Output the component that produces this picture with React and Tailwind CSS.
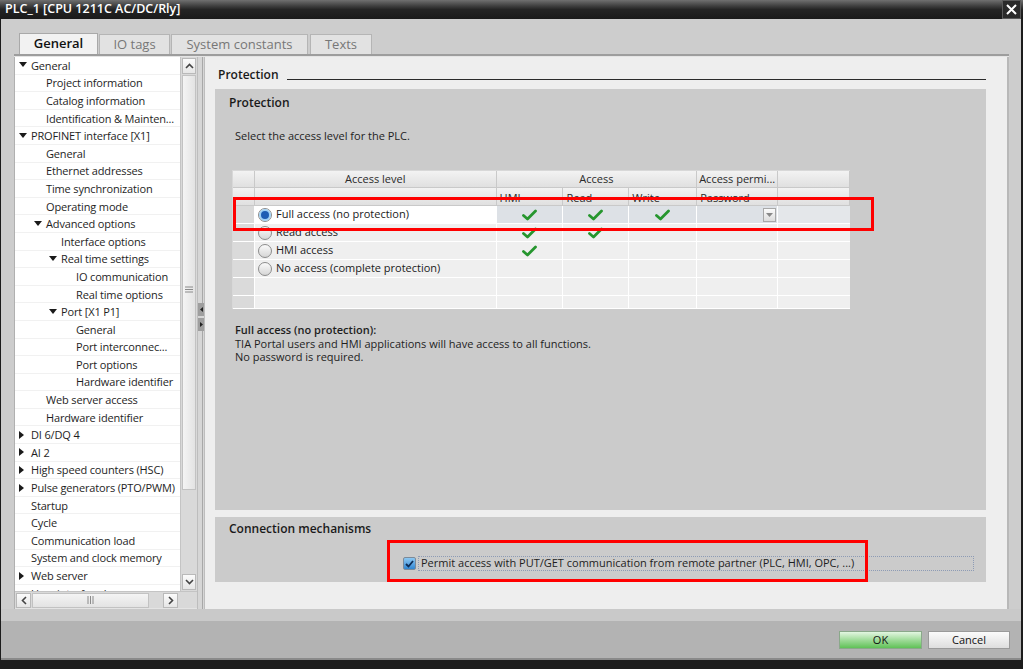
import React from "react";

const FONT = { fontFamily: '"Open Sans", "Noto Sans", sans-serif' };

const tree = [
  [0, "down", "General"],
  [1, null, "Project information"],
  [1, null, "Catalog information"],
  [1, null, "Identification & Mainten..."],
  [0, "down", "PROFINET interface [X1]"],
  [1, null, "General"],
  [1, null, "Ethernet addresses"],
  [1, null, "Time synchronization"],
  [1, null, "Operating mode"],
  [1, "down", "Advanced options"],
  [2, null, "Interface options"],
  [2, "down", "Real time settings"],
  [3, null, "IO communication"],
  [3, null, "Real time options"],
  [2, "down", "Port [X1 P1]"],
  [3, null, "General"],
  [3, null, "Port interconnec..."],
  [3, null, "Port options"],
  [3, null, "Hardware identifier"],
  [1, null, "Web server access"],
  [1, null, "Hardware identifier"],
  [0, "right", "DI 6/DQ 4"],
  [0, "right", "AI 2"],
  [0, "right", "High speed counters (HSC)"],
  [0, "right", "Pulse generators (PTO/PWM)"],
  [0, null, "Startup"],
  [0, null, "Cycle"],
  [0, null, "Communication load"],
  [0, null, "System and clock memory"],
  [0, "right", "Web server"],
  [0, null, "User interface languages"],
];

const indent = {
  0: "pl-[4px]",
  1: "pl-[19px]",
  2: "pl-[34px]",
  3: "pl-[49px]",
};

function Arrow({ dir }) {
  if (!dir) return <span className="w-[12px] shrink-0" />;
  return (
    <span className="w-[12px] shrink-0 flex items-center">
      {dir === "down" ? (
        <svg width="8" height="6" viewBox="0 0 8 6"><path d="M0 0 H8 L4 5 Z" fill="#1a1a1a" /></svg>
      ) : (
        <svg width="6" height="8" viewBox="0 0 6 8"><path d="M0 0 V8 L5 4 Z" fill="#1a1a1a" /></svg>
      )}
    </span>
  );
}

function Check() {
  return (
    <svg width="15" height="12" viewBox="0 0 15 12">
      <path d="M1.5 6.5 L5.5 10 L13.5 2" stroke="#26962e" strokeWidth="2.8" fill="none" strokeLinecap="round" strokeLinejoin="round" />
    </svg>
  );
}

function Radio({ on }) {
  return (
    <span className="w-[14px] h-[14px] rounded-full border border-[#8c8c8c] bg-gradient-to-b from-[#fafafa] to-[#d6d6d6] flex items-center justify-center shrink-0">
      {on && <span className="w-[8px] h-[8px] rounded-full bg-[#1d5db4] ring-2 ring-[#9fd0f4]" />}
    </span>
  );
}

const cols = ["w-[67px]", "w-[66px]", "w-[68px]"];

function Row({ label, checks, selected, empty, last }) {
  const h = last ? "h-[13px]" : "h-[18px]";
  return (
    <div className={`flex ${h} border-b border-white`}>
      <div className="w-[22px] bg-[#dadada] border-r border-white" />
      <div className={`w-[242px] flex items-center gap-[4px] pl-[3px] border-r border-white ${selected ? "bg-white" : "bg-[#efefef]"}`}>
        {!empty && <Radio on={selected} />}
        {!empty && <span className="text-[11px] text-[#1a1a1a]">{label}</span>}
      </div>
      {cols.map((c, i) => (
        <div key={i} className={`${c} flex items-center justify-center border-r border-white ${selected ? "bg-[#dde1e6]" : "bg-[#efefef]"}`}>
          {checks && checks[i] ? <Check /> : null}
        </div>
      ))}
      <div className={`w-[81px] flex items-center justify-end pr-[1px] border-r border-white ${selected ? "bg-[#dde1e6]" : "bg-[#efefef]"}`}>
        {selected && (
          <span className="w-[13px] h-[14px] border border-[#a8a8a8] bg-gradient-to-b from-[#fbfbfb] to-[#dcdcdc] flex items-center justify-center">
            <svg width="7" height="4" viewBox="0 0 7 4"><path d="M0 0 H7 L3.5 4 Z" fill="#888" /></svg>
          </span>
        )}
      </div>
      <div className={`w-[72px] ${selected ? "bg-[#e4e7ea]" : "bg-[#efefef]"}`} />
    </div>
  );
}

export default function App() {
  const hdr = "bg-gradient-to-b from-[#f3f3f3] to-[#e0e0e0] border-r border-b border-[#c9c9c9] text-[11px] text-[#2a2a2a] flex items-center";
  return (
    <div className="w-[1023px] h-[669px] bg-[#1c1c1c] relative overflow-hidden select-none" style={FONT}>
      {/* title bar */}
      <div className="h-[19px] flex items-center justify-between bg-gradient-to-b from-[#707070] via-[#242424] to-[#1a1a1a]">
        <span className="pl-[5px] text-white text-[12.5px] font-semibold leading-none">PLC_1 [CPU 1211C AC/DC/Rly]</span>
        <span className="w-[19px] h-[19px] mr-[2px] border border-[#5a5a5a] bg-[#2a2a2a] flex items-center justify-center">
          <svg width="11" height="11" viewBox="0 0 11 11"><path d="M1 1 L10 10 M10 1 L1 10" stroke="#fff" strokeWidth="2" /></svg>
        </span>
      </div>

      {/* body */}
      <div className="mx-[1px] mr-[2px] h-[641px] bg-[#cdcdcd] flex flex-col">
        {/* tabs */}
        <div className="flex items-end h-[35px] pl-[18px] gap-[1px]">
          <div className="h-[21px] w-[79px] bg-[#f2f2f2] border border-[#a9a9a9] border-b-0 flex items-center justify-center text-[13px] font-semibold text-[#111]">General</div>
          <div className="h-[20px] w-[71px] bg-[#e2e2e2] border border-[#b5b5b5] border-b-0 flex items-center justify-center text-[13px] text-[#777]">IO tags</div>
          <div className="h-[20px] w-[137px] bg-[#e2e2e2] border border-[#b5b5b5] border-b-0 flex items-center justify-center text-[13px] text-[#777]">System constants</div>
          <div className="h-[20px] w-[62px] ml-[1px] bg-[#e2e2e2] border border-[#b5b5b5] border-b-0 flex items-center justify-center text-[13px] text-[#777]">Texts</div>
        </div>

        {/* frame */}
        <div className="ml-[13px] w-[995px] h-[555px] border-t-2 border-[#9d9d9d] bg-[#e4e4e4] pt-[1px] flex">
          {/* sidebar */}
          <div className="w-[183px] flex flex-col border-l border-[#b0b0b0]">
            <div className="flex h-[534px]">
              <div className="w-[165px] bg-white overflow-hidden">
                {tree.map(([lv, ar, t], i) => (
                  <div key={i} className={`h-[17.6px] flex items-center border-b border-[#f1f1f1] ${indent[lv]}`}>
                    <Arrow dir={ar} />
                    <span className="text-[11px] tracking-[-0.15px] text-[#1e1e1e] whitespace-nowrap leading-none">{t}</span>
                  </div>
                ))}
              </div>
              {/* vertical scrollbar */}
              <div className="w-[17px] bg-[#d9d9d9] flex flex-col border-l border-[#c4c4c4]">
                <div className="h-[16px] m-[1px] border border-[#b9b9b9] bg-gradient-to-b from-[#fbfbfb] to-[#e6e6e6] flex items-center justify-center">
                  <svg width="9" height="6" viewBox="0 0 9 6"><path d="M1 5 L4.5 1.5 L8 5" stroke="#444" strokeWidth="1.6" fill="none" /></svg>
                </div>
                <div className="h-[415px] mx-[1px] border border-[#c2c2c2] bg-gradient-to-r from-[#f4f4f4] to-[#e3e3e3] flex items-center justify-center pt-[14px]">
                  <svg width="8" height="7" viewBox="0 0 8 7"><path d="M0 1 H8 M0 3.5 H8 M0 6 H8" stroke="#8a8a8a" strokeWidth="1" /></svg>
                </div>
                <div className="flex-1" />
                <div className="h-[16px] m-[1px] border border-[#b9b9b9] bg-gradient-to-b from-[#fbfbfb] to-[#e6e6e6] flex items-center justify-center">
                  <svg width="9" height="6" viewBox="0 0 9 6"><path d="M1 1 L4.5 4.5 L8 1" stroke="#444" strokeWidth="1.6" fill="none" /></svg>
                </div>
              </div>
            </div>
            {/* horizontal scrollbar */}
            <div className="h-[17px] bg-[#d9d9d9] flex items-center px-[1px] gap-[1px] border-t border-[#c4c4c4]">
              <div className="w-[15px] h-[15px] border border-[#b9b9b9] bg-gradient-to-b from-[#fbfbfb] to-[#e6e6e6] flex items-center justify-center">
                <svg width="6" height="9" viewBox="0 0 6 9"><path d="M5 1 L1.5 4.5 L5 8" stroke="#444" strokeWidth="1.6" fill="none" /></svg>
              </div>
              <div className="w-[117px] h-[15px] border border-[#c2c2c2] bg-gradient-to-b from-[#f4f4f4] to-[#e3e3e3] flex items-center justify-center">
                <svg width="7" height="8" viewBox="0 0 7 8"><path d="M1 0 V8 M3.5 0 V8 M6 0 V8" stroke="#8a8a8a" strokeWidth="1" /></svg>
              </div>
              <div className="flex-1" />
              <div className="w-[15px] h-[15px] border border-[#b9b9b9] bg-gradient-to-b from-[#fbfbfb] to-[#e6e6e6] flex items-center justify-center">
                <svg width="6" height="9" viewBox="0 0 6 9"><path d="M1 1 L4.5 4.5 L1 8" stroke="#444" strokeWidth="1.6" fill="none" /></svg>
              </div>
              <div className="w-[17px]" />
            </div>
          </div>

          {/* divider */}
          <div className="w-[8px] bg-[#d6d6d6] flex flex-col items-center border-l border-[#bdbdbd] border-r">
            <div className="w-[4px] h-[246px] border-r border-[#a8a8a8]" />
            <div className="w-[6px] h-[13px] bg-[#9e9e9e] flex items-center justify-center">
              <svg width="3" height="5" viewBox="0 0 3 5"><path d="M3 0 V5 L0 2.5 Z" fill="#222" /></svg>
            </div>
            <div className="w-[6px] h-[13px] mt-[2px] bg-[#9e9e9e] flex items-center justify-center">
              <svg width="3" height="5" viewBox="0 0 3 5"><path d="M0 0 V5 L3 2.5 Z" fill="#222" /></svg>
            </div>
            <div className="w-[4px] flex-1 border-r border-[#a8a8a8]" />
          </div>

          {/* right content */}
          <div className="flex-1 bg-[#eeeeee] flex flex-col border-r-2 border-[#b8b8b8]">
            <div className="h-[32px] flex items-center pl-[13px] pr-[21px] pt-[4px]">
              <span className="text-[12px] font-semibold text-[#1a1a1a]">Protection</span>
              <div className="flex-1 ml-[8px] mt-[8px] border-t border-[#2a2a2a]" />
            </div>

            {/* protection panel */}
            <div className="ml-[10px] w-[771px] h-[421px] bg-[#cbcbcb] flex flex-col">
              <div className="pl-[14px] pt-[6px] text-[12px] font-semibold text-[#1a1a1a] leading-[16px]">Protection</div>
              <div className="pl-[20px] mt-[18px] text-[11px] text-[#1e1e1e] leading-[14px]">Select the access level for the PLC.</div>

              {/* table */}
              <div className="ml-[17px] mt-[27px] w-[618px] flex flex-col border-t border-l border-[#d8d8d8]">
                <div className="flex h-[17px]">
                  <div className={`w-[22px] ${hdr}`} />
                  <div className={`w-[242px] justify-center ${hdr}`}>Access level</div>
                  <div className={`w-[201px] justify-center ${hdr}`}>Access</div>
                  <div className={`w-[81px] justify-center ${hdr}`}>Access permi...</div>
                  <div className={`w-[72px] ${hdr}`} />
                </div>
                <div className="flex h-[18px]">
                  <div className={`w-[22px] ${hdr}`} />
                  <div className={`w-[242px] ${hdr}`} />
                  <div className={`w-[67px] pl-[3px] pt-[4px] ${hdr}`}>HMI</div>
                  <div className={`w-[66px] pl-[3px] pt-[4px] ${hdr}`}>Read</div>
                  <div className={`w-[68px] pl-[3px] pt-[4px] ${hdr}`}>Write</div>
                  <div className={`w-[81px] pl-[3px] pt-[4px] ${hdr}`}>Password</div>
                  <div className={`w-[72px] ${hdr}`} />
                </div>
                <Row label="Full access (no protection)" checks={[true, true, true]} selected />
                <Row label="Read access" checks={[true, true, false]} />
                <Row label="HMI access" checks={[true, false, false]} />
                <Row label="No access (complete protection)" />
                <Row empty />
                <Row empty last />
              </div>

              <div className="pl-[20px] mt-[14px] text-[11px] text-[#1e1e1e] leading-[13.5px]">
                <div className="font-semibold">Full access (no protection):</div>
                <div>TIA Portal users and HMI applications will have access to all functions.</div>
                <div>No password is required.</div>
              </div>
            </div>

            <div className="h-[7px]" />

            {/* connection mechanisms */}
            <div className="ml-[10px] w-[771px] h-[65px] bg-[#cbcbcb] flex flex-col">
              <div className="pl-[14px] pt-[4px] text-[12px] font-semibold text-[#1a1a1a] leading-[16px]">Connection mechanisms</div>
              <div className="mt-[19px] ml-[188px] flex items-center">
                <span className="w-[13px] h-[13px] border border-[#7c8a99] rounded-[2px] bg-gradient-to-b from-[#8cc8f2] to-[#2f86d2] flex items-center justify-center">
                  <svg width="9" height="8" viewBox="0 0 9 8"><path d="M1 4 L3.5 6.5 L8 1" stroke="#0d2c55" strokeWidth="1.8" fill="none" /></svg>
                </span>
                <span className="ml-[2px] w-[556px] h-[15px] border border-dotted border-[#8d9bb5] flex items-center pl-[2px] text-[11px] text-[#1e1e1e]">
                  Permit access with PUT/GET communication from remote partner (PLC, HMI, OPC, ...)
                </span>
              </div>
            </div>
          </div>
        </div>

        {/* bottom bar */}
        <div className="h-[12px] bg-[#c9c9c9]" />
        <div className="flex-1 bg-[#b3b3b3] flex justify-end items-start pt-[10px] pr-[11px] gap-[6px] border-b-2 border-[#8a8a8a]">
          <div className="w-[83px] h-[18px] border border-[#8aa88a] bg-gradient-to-b from-[#e3f6e1] via-[#9fdb99] to-[#5fc256] flex items-center justify-center text-[11px] text-[#111]">OK</div>
          <div className="w-[82px] h-[18px] border border-[#9a9a9a] bg-gradient-to-b from-[#fbfbfb] to-[#dedede] flex items-center justify-center text-[11px] text-[#111]">Cancel</div>
        </div>
      </div>

      {/* red highlight boxes */}
      <div className="absolute left-[233px] top-[197px] w-[641px] h-[34px] border-[3px] border-[#ff0000]" />
      <div className="absolute left-[387px] top-[540px] w-[481px] h-[42px] border-[3px] border-[#ff0000]" />
    </div>
  );
}
